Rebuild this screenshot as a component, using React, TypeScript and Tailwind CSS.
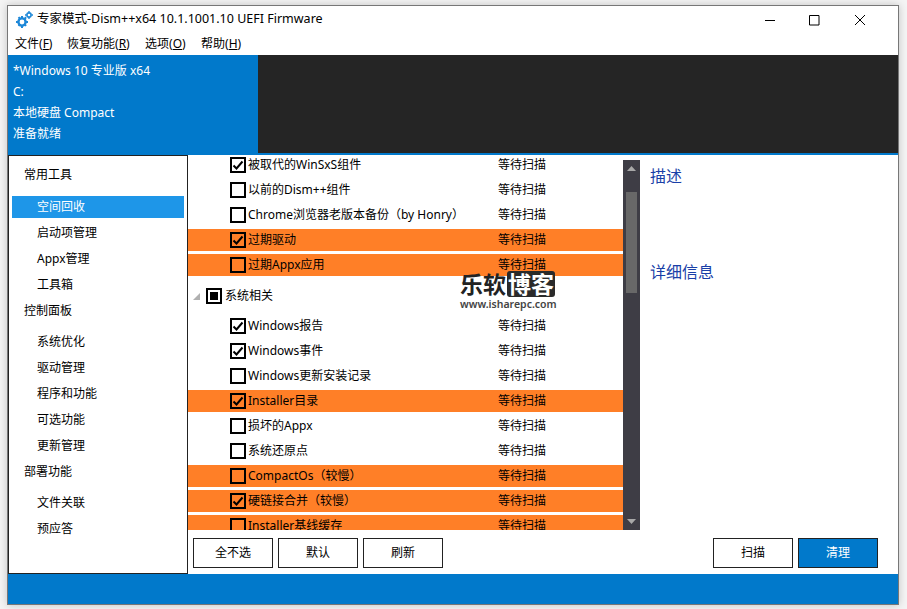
import React from 'react';

const font = { fontFamily: '"Noto Sans", "Noto Sans CJK SC", sans-serif' };

const CheckBox = ({ checked }: { checked?: boolean }) => (
  <span className="flex h-4 w-4 shrink-0 items-center justify-center border-2 border-black">
    {checked && (
      <svg width="12" height="12" viewBox="0 0 12 12" fill="none">
        <path d="M1.5 6.5 L4.5 9.5 L10.5 2.5" stroke="#000" strokeWidth="2" />
      </svg>
    )}
  </span>
);

interface RowProps {
  label: string;
  checked?: boolean;
  warn?: boolean;
}
const ScanRow = ({ label, checked, warn }: RowProps) => (
  <div className={`mb-[3px] flex h-[22px] shrink-0 items-center pl-[42px] ${warn ? 'bg-[#ff7f27]' : ''}`}>
    <CheckBox checked={checked} />
    <span className="ml-[2px] w-[250px] whitespace-nowrap">{label}</span>
    <span>等待扫描</span>
  </div>
);

const Btn = ({ label, primary }: { label: string; primary?: boolean }) => (
  <button
    className={`h-[30px] w-20 border border-[#222] ${primary ? 'bg-[#0179cb] text-white' : 'bg-white text-black'}`}
  >
    {label}
  </button>
);

const NavHead = ({ label, top }: { label: string; top: string }) => (
  <div className={`flex h-[22px] items-center pl-[15px] ${top}`}>{label}</div>
);

const NavItem = ({ label, active }: { label: string; active?: boolean }) => (
  <div className={`mx-[3px] mb-1 flex h-[22px] items-center pl-[25px] ${active ? 'bg-[#1e96e8] text-white' : ''}`}>
    {label}
  </div>
);

const MenuItem = ({ label, hot, width }: { label: string; hot: string; width: string }) => (
  <span className={`whitespace-nowrap ${width}`}>
    {label}(<span className="underline">{hot}</span>)
  </span>
);

const App = () => {
  const group1: RowProps[] = [
    { label: '被取代的WinSxS组件', checked: true },
    { label: '以前的Dism++组件' },
    { label: 'Chrome浏览器老版本备份（by Honry）' },
    { label: '过期驱动', checked: true, warn: true },
    { label: '过期Appx应用', warn: true },
  ];
  const group2: RowProps[] = [
    { label: 'Windows报告', checked: true },
    { label: 'Windows事件', checked: true },
    { label: 'Windows更新安装记录' },
    { label: 'Installer目录', checked: true, warn: true },
    { label: '损坏的Appx' },
    { label: '系统还原点' },
    { label: 'CompactOs（较慢）', warn: true },
    { label: '硬链接合并（较慢）', checked: true, warn: true },
    { label: 'Installer基线缓存', warn: true },
  ];

  return (
    <div className="h-[609px] w-[907px] overflow-hidden bg-[#f4f4f4] pl-[7px] pt-[5px] text-[12px] text-black" style={font}>
      <div className="flex h-[600px] w-[892px] flex-col border border-[#777] bg-white shadow-[0_0_8px_rgba(0,0,0,0.2)]">
        {/* title bar */}
        <div className="flex h-[27px] shrink-0 items-center pl-2">
          <svg width="17" height="17" viewBox="0 0 17 17" fill="#1e88d8">
            <circle cx="6" cy="11" r="3.6" fill="none" stroke="#1e88d8" strokeWidth="2.4" />
            <path d="M5 5h2v2H5zM5 15h2v2H5zM0 10h2v2H0zM10 10h2v2h-2z" />
            <path d="M1.8 6.8l1.4-1.4 1.4 1.4-1.4 1.4zM8 14.2l1.4-1.4 1.4 1.4-1.4 1.4zM8 7l1.4-1.4 1.4 1.4-1.4 1.4zM1.8 14.2l1.4-1.4 1.4 1.4-1.4 1.4z" />
            <circle cx="13" cy="4" r="2.1" fill="none" stroke="#1e88d8" strokeWidth="1.6" />
            <path d="M12.3 0h1.4v1.4h-1.4zM12.3 6.6h1.4V8h-1.4zM9 3.3h1.4v1.4H9zM15.6 3.3H17v1.4h-1.4z" />
          </svg>
          <span className="ml-[4px] whitespace-nowrap text-[12.5px]">专家模式-Dism++x64 10.1.1001.10 UEFI Firmware</span>
          <div className="ml-auto flex items-center">
            <svg width="120" height="12" viewBox="0 0 120 12" className="mr-[13px]" fill="none" stroke="#000">
              <path d="M0 6.5h10M44.5 1.5h9.5v9.5h-9.5zM90 1l10 10M100 1 90 11" />
            </svg>
          </div>
        </div>
        {/* menu */}
        <div className="flex h-[22px] shrink-0 items-center pl-[7px]">
          <MenuItem label="文件" hot="F" width="w-[52px]" />
          <MenuItem label="恢复功能" hot="R" width="w-[78px]" />
          <MenuItem label="选项" hot="O" width="w-[56px]" />
          <MenuItem label="帮助" hot="H" width="w-[50px]" />
        </div>
        {/* status header */}
        <div className="flex h-[100px] shrink-0 border-b-2 border-[#0179cb] bg-[#0179cb] text-white">
          <div className="w-[250px] shrink-0 pl-[5px] pt-[5px] leading-[21px]">
            <div>*Windows 10 专业版 x64</div>
            <div>C:</div>
            <div>本地硬盘 Compact</div>
            <div>准备就绪</div>
          </div>
          <div className="flex-1 bg-[#252525]" />
        </div>
        {/* body */}
        <div className="flex min-h-0 flex-1">
          <div className="w-[180px] shrink-0 border border-[#222] pt-[8px]">
            <NavHead label="常用工具" top="" />
            <div className="mt-[10px]">
              <NavItem label="空间回收" active />
              <NavItem label="启动项管理" />
              <NavItem label="Appx管理" />
              <NavItem label="工具箱" />
            </div>
            <NavHead label="控制面板" top="mt-[2px]" />
            <div className="mt-[9px]">
              <NavItem label="系统优化" />
              <NavItem label="驱动管理" />
              <NavItem label="程序和功能" />
              <NavItem label="可选功能" />
              <NavItem label="更新管理" />
            </div>
            <NavHead label="部署功能" top="mt-[2px]" />
            <div className="mt-[9px]">
              <NavItem label="文件关联" />
              <NavItem label="预应答" />
            </div>
          </div>

          <div className="relative flex min-w-0 flex-1 flex-col">
            <div className="flex h-[375px] shrink-0">
              <div className="h-full w-[435px] shrink-0 overflow-hidden">
                <div className="-mt-px flex flex-col">
                  {group1.map((r) => (
                    <ScanRow key={r.label} {...r} />
                  ))}
                  <div className="mb-[2px] flex h-[34px] shrink-0 items-center pl-[5px]">
                    <svg width="7" height="7" viewBox="0 0 7 7" fill="#b0b0b0">
                      <path d="M7 0v7H0z" />
                    </svg>
                    <span className="ml-[6px] flex h-4 w-4 items-center justify-center border-2 border-black">
                      <span className="h-2 w-2 bg-black" />
                    </span>
                    <span className="ml-[3px]">系统相关</span>
                  </div>
                  {group2.map((r) => (
                    <ScanRow key={r.label} {...r} />
                  ))}
                </div>
              </div>
              <div className="mt-[5px] flex h-[370px] w-[17px] shrink-0 flex-col items-center bg-[#3e3d45]">
                <svg width="9" height="5" viewBox="0 0 9 5" fill="#a8a8a8" className="mt-[6px]">
                  <path d="M4.5 0 9 5H0z" />
                </svg>
                <div className="mt-[21px] h-[101px] w-[11px] bg-[#686868]" />
                <svg width="9" height="5" viewBox="0 0 9 5" fill="#a8a8a8" className="mt-auto mb-[6px]">
                  <path d="M0 0h9L4.5 5z" />
                </svg>
              </div>
              <div className="flex-1 pl-[10px] text-[16px] text-[#1a3fa8]">
                <div className="mt-[9px] leading-[24px]">描述</div>
                <div className="mt-[72px] leading-[24px]">详细信息</div>
              </div>
            </div>
            <div className="mt-2 flex pl-[5px] pr-[20px]">
              <div className="flex gap-[5px]">
                <Btn label="全不选" />
                <Btn label="默认" />
                <Btn label="刷新" />
              </div>
              <div className="ml-auto flex gap-[5px]">
                <Btn label="扫描" />
                <Btn label="清理" primary />
              </div>
            </div>
            {/* watermark */}
            <div className="absolute left-[272px] top-[116px] w-[104px]">
              <div className="flex items-center">
                <span className="text-[23px] font-bold leading-[26px] text-[#222]">乐软</span>
                <span className="ml-px rounded-[3px] bg-[#2a2a2a] px-px text-[23px] font-bold leading-[26px] text-white">博客</span>
              </div>
              <div className="whitespace-nowrap text-[10.5px] font-semibold leading-[14px] text-[#444]">www.isharepc.com</div>
            </div>
          </div>
        </div>
        {/* bottom bar */}
        <div className="h-[30px] shrink-0 bg-[#0179cb]" />
      </div>
    </div>
  );
};

export default App;
